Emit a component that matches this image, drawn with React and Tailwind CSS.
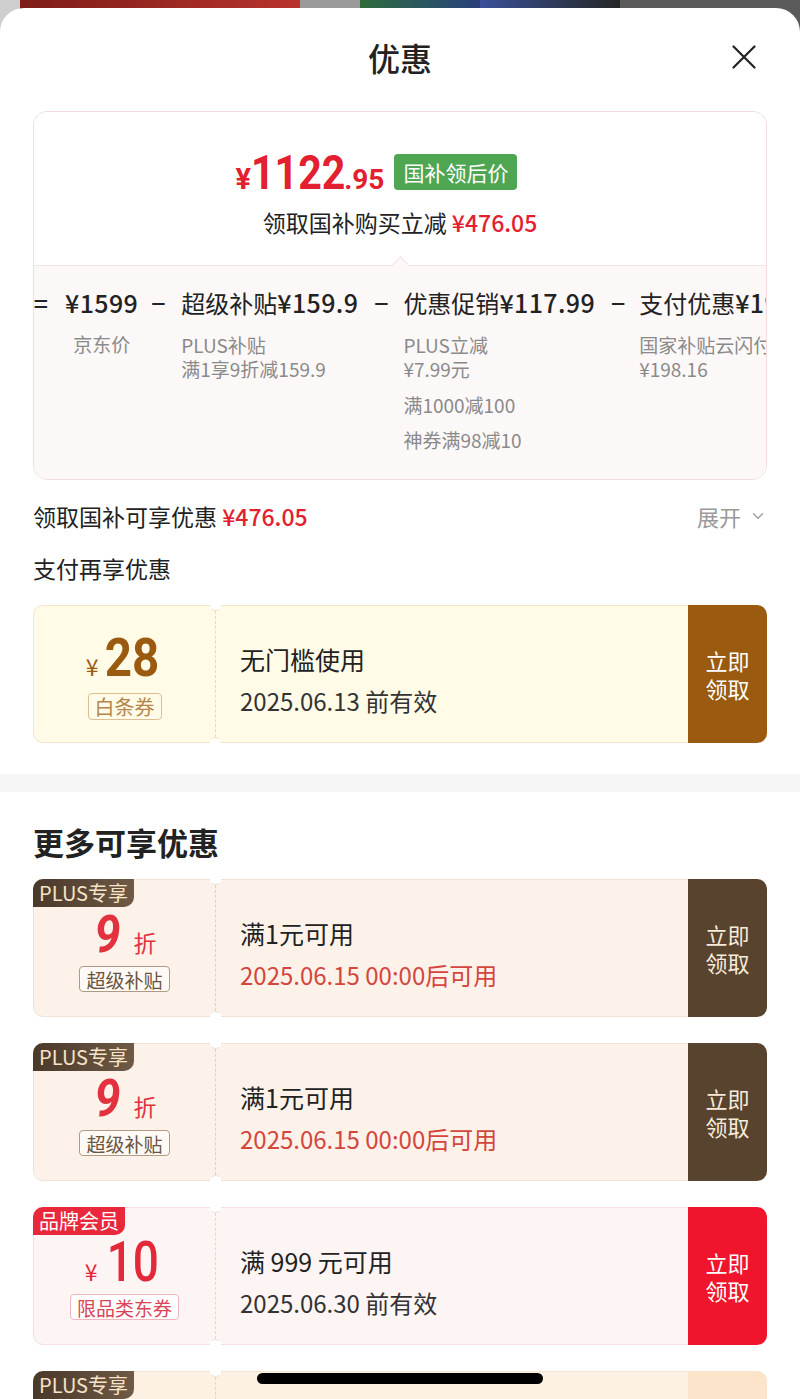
import { ChevronDown } from 'lucide-react';

const themes = {
    gold: {
        card: 'bg-[#fffbe7] border-[#f2e6c8]',
        dash: 'border-[#ead9b2]',
        notch: 'border-b-[#f2e6c8]',
        btn: 'bg-[#9a5a10] text-white',
    },
    plus: {
        card: 'bg-[#fcf2ea] border-[#f1e2d5]',
        dash: 'border-[#e4d0be]',
        notch: 'border-b-[#f1e2d5]',
        btn: 'bg-[#58432f] text-[#f8ead8]',
    },
    brand: {
        card: 'bg-[#fdf4f4] border-[#f4e0e0]',
        dash: 'border-[#eed2d2]',
        notch: 'border-b-[#f4e0e0]',
        btn: 'bg-[#f0142c] text-white',
    },
    plusLight: {
        card: 'bg-[#fdf1e3] border-[#f4e4d2]',
        dash: 'border-[#ead6c0]',
        notch: 'border-b-[#f4e4d2]',
        btn: 'bg-[#fce4ca] text-[#fce4ca]',
    },
};

const Badge = ({ className, children }) => (
    <span className={`absolute -top-px -left-px z-10 h-[28px] px-[6px] flex items-center text-[20px] leading-none rounded-tl-[10px] rounded-br-[10px] ${className}`}>
        {children}
    </span>
);

const Coupon = ({ theme, badge, left, title, sub, subCls = 'text-[#333]' }) => {
    const t = themes[theme];
    return (
        <div className={`relative flex h-[138px] shrink-0 rounded-[10px] border ${t.card}`}>
            {badge}
            <div className="w-[181px] flex flex-col items-center pt-[24px]">{left}</div>
            {/* dashed split with notches */}
            <div className={`relative border-l border-dashed ${t.dash}`}>
                <span className={`absolute -top-[6px] -left-[6px] w-[11px] h-[11px] rounded-full bg-white border border-transparent ${t.notch}`} />
                <span className={`absolute -bottom-[6px] -left-[6px] w-[11px] h-[11px] rounded-full bg-white border border-transparent rotate-180 ${t.notch}`} />
            </div>
            <div className="flex-1 flex flex-col pl-[24px] pt-[36px]">
                <span className="text-[25px] leading-[34px] text-[#222]">{title}</span>
                <span className={`mt-[10px] text-[24px] leading-[30px] ${subCls}`}>{sub}</span>
            </div>
            <div className={`-my-px -mr-px w-[79px] flex flex-col items-center justify-center rounded-r-[10px] text-[22px] leading-[28px] ${t.btn}`}>
                <span>立即</span>
                <span>领取</span>
            </div>
        </div>
    );
};

const Op = ({ className = '', children }) => (
    <span className={`shrink-0 w-[18px] text-center text-[25px] leading-[32px] font-medium text-[#222] ${className}`}>{children}</span>
);

const Num = ({ children }) => (
    <span className="font-medium text-[25px] tracking-[0.4px]">{children}</span>
);

const Sub = ({ children, className = '' }) => (
    <span className={`text-[19px] leading-[24px] text-[#8a8a8a] ${className}`}>{children}</span>
);

const PlusLeft = () => (
    <>
        <div className="flex items-baseline h-[44px] mt-[9px]">
            <span className="inline-block font-['Roboto',sans-serif] italic font-bold text-[52px] leading-[44px] text-[#e2323f] scale-x-[0.9]">9</span>
            <span className="ml-[12px] text-[23px] leading-[30px] text-[#e2323f]">折</span>
        </div>
        <span className="mt-[9px] h-[26px] px-[6px] flex items-center border border-[#b09a84] rounded-[4px] bg-[#fffaf5] text-[19px] leading-none text-[#6a5440]">超级补贴</span>
    </>
);

const plusBadge = (
    <Badge className="bg-gradient-to-r from-[#4a3829] to-[#6f5a46] text-[#f7e4c8]">PLUS专享</Badge>
);

export default function App() {
    return (
        <div className="relative w-[800px] h-[1399px] overflow-hidden bg-[#bdbdbd] font-['Noto_Sans_CJK_SC','Noto_Sans',sans-serif] text-[#222]">
            {/* blurred page behind the sheet */}
            <div className="absolute top-0 left-0 right-0 h-[40px] flex">
                <div className="w-[20px] bg-[#cfcfcf]" />
                <div className="w-[280px] bg-gradient-to-r from-[#7d1c18] to-[#b8332c]" />
                <div className="w-[60px] bg-[#9a9a9a]" />
                <div className="w-[120px] bg-gradient-to-r from-[#2f6b3a] to-[#2b3f7a]" />
                <div className="w-[140px] bg-gradient-to-r from-[#3a4f9a] to-[#262626]" />
                <div className="flex-1 bg-[#5a5a5a]" />
            </div>

            <div className="relative mt-[8px] h-[1391px] bg-white rounded-t-[24px] flex flex-col">
                {/* header */}
                <div className="relative h-[98px] flex items-center justify-center shrink-0">
                    <span className="text-[32px] font-medium leading-none">优惠</span>
                    <svg className="absolute right-[44px] top-[37px]" width="24" height="24" viewBox="0 0 24 24">
                        <path d="M1.5 1.5 L22.5 22.5 M22.5 1.5 L1.5 22.5" stroke="#222" strokeWidth="2.2" strokeLinecap="round" />
                    </svg>
                </div>

                {/* price card */}
                <div className="mx-[33px] mt-[5px] rounded-[14px] border border-[#f3dcdd] overflow-hidden shrink-0">
                    <div className="relative h-[153px] bg-white flex flex-col items-center">
                        <div className="mt-[35px] mr-[47px] flex items-center h-[50px]">
                            <div className="flex items-baseline text-[#e3202f] font-['Roboto',sans-serif] font-bold">
                                <span className="text-[29px] leading-none">¥</span>
                                <span className="w-[93px] text-[49px] leading-none">
                                    <span className="inline-block scale-x-[0.84] origin-left">1122</span>
                                </span>
                                <span className="text-[28px] leading-none">.95</span>
                            </div>
                            <span className="ml-[10px] h-[36px] px-[9px] flex items-center rounded-[4px] bg-[#4ea652] text-white text-[21px] leading-none">国补领后价</span>
                        </div>
                        <div className="mt-[10px] text-[23px] leading-[30px] text-[#222]">
                            领取国补购买立减 <span className="text-[#e3202f] font-medium">¥476.05</span>
                        </div>
                        <span className="absolute -bottom-[7px] left-[360px] w-[13px] h-[13px] rotate-45 bg-[#fdf8f8] border-l border-t border-[#f3e3e3]" />
                    </div>
                    <div className="h-[214px] border-t border-[#f3e3e3] bg-[#fdf8f8] overflow-hidden">
                        <div className="flex items-start whitespace-nowrap pt-[20px] ml-[-2px] text-[24px] leading-[32px]">
                            <Op>=</Op>
                            <div className="ml-[15px] flex flex-col items-center">
                                <Num>¥1599</Num>
                                <Sub className="mt-[14px]">京东价</Sub>
                            </div>
                            <Op className="ml-[11px]">−</Op>
                            <div className="ml-[14px] flex flex-col">
                                <span>超级补贴<Num>¥159.9</Num></span>
                                <Sub className="mt-[14px]">PLUS补贴</Sub>
                                <Sub>满1享9折减159.9</Sub>
                            </div>
                            <Op className="ml-[14px]">−</Op>
                            <div className="ml-[13px] flex flex-col">
                                <span>优惠促销<Num>¥117.99</Num></span>
                                <Sub className="mt-[14px]">PLUS立减</Sub>
                                <Sub>¥7.99元</Sub>
                                <Sub className="mt-[12px]">满1000减100</Sub>
                                <Sub className="mt-[11px]">神券满98减10</Sub>
                            </div>
                            <Op className="ml-[14px]">−</Op>
                            <div className="ml-[12px] flex flex-col">
                                <span>支付优惠<Num>¥198.16</Num></span>
                                <Sub className="mt-[14px]">国家补贴云闪付</Sub>
                                <Sub>¥198.16</Sub>
                            </div>
                        </div>
                    </div>
                </div>

                <div className="mx-[33px] mt-[21px] flex items-center justify-between shrink-0">
                    <span className="text-[23px] leading-[30px]">
                        领取国补可享优惠 <span className="text-[#e3202f] font-medium">¥476.05</span>
                    </span>
                    <span className="flex items-center gap-[8px] text-[22px] leading-[30px] text-[#999]">
                        展开
                        <ChevronDown size={18} strokeWidth={1.6} />
                    </span>
                </div>
                <div className="mx-[33px] mt-[22px] text-[23px] leading-[30px] shrink-0">支付再享优惠</div>

                <div className="mx-[33px] mt-[22px] flex flex-col shrink-0">
                    <Coupon
                        theme="gold"
                        left={
                            <>
                                <div className="flex items-baseline h-[56px] text-[#9a5a10]">
                                    <span className="text-[23px] leading-none">¥</span>
                                    <span className="ml-[3px] font-['Roboto',sans-serif] font-bold text-[54px] leading-[56px] scale-x-[0.88] inline-block">28</span>
                                </div>
                                <span className="mt-[7px] h-[27px] px-[6px] flex items-center border border-[#dcbf94] rounded-[4px] text-[20px] leading-none text-[#b5854c]">白条券</span>
                            </>
                        }
                        title="无门槛使用"
                        sub="2025.06.13 前有效"
                    />
                </div>

                <div className="mt-[31px] h-[18px] bg-[#f6f6f6] shrink-0" />

                <div className="mx-[33px] mt-[31px] text-[31px] leading-[38px] font-bold shrink-0">更多可享优惠</div>

                <div className="mx-[33px] mt-[18px] flex flex-col gap-[26px]">
                    <Coupon
                        theme="plus"
                        badge={plusBadge}
                        left={<PlusLeft />}
                        title="满1元可用"
                        sub="2025.06.15 00:00后可用"
                        subCls="text-[#d4463d]"
                    />
                    <Coupon
                        theme="plus"
                        badge={plusBadge}
                        left={<PlusLeft />}
                        title="满1元可用"
                        sub="2025.06.15 00:00后可用"
                        subCls="text-[#d4463d]"
                    />
                    <Coupon
                        theme="brand"
                        badge={<Badge className="bg-[#e9293b] text-white">品牌会员</Badge>}
                        left={
                            <>
                                <div className="flex items-baseline h-[48px] mt-[6px] text-[#e3283a]">
                                    <span className="text-[23px] leading-none">¥</span>
                                    <span className="ml-[3px] font-['Roboto',sans-serif] font-medium text-[56px] leading-[48px] scale-x-[0.82] inline-block">10</span>
                                </div>
                                <span className="mt-[8px] h-[26px] px-[6px] flex items-center border border-[#f0b6bd] rounded-[4px] bg-white text-[19px] leading-none text-[#d94456]">限品类东券</span>
                            </>
                        }
                        title="满 999 元可用"
                        sub="2025.06.30 前有效"
                    />
                    <Coupon
                        theme="plusLight"
                        badge={plusBadge}
                        left={<PlusLeft />}
                        title="满1元可用"
                        sub="2025.06.15 00:00后可用"
                        subCls="text-[#d4463d]"
                    />
                </div>
            </div>

            {/* home indicator */}
            <div className="absolute left-[257px] bottom-[15px] w-[286px] h-[11px] rounded-full bg-black" />
        </div>
    );
}
